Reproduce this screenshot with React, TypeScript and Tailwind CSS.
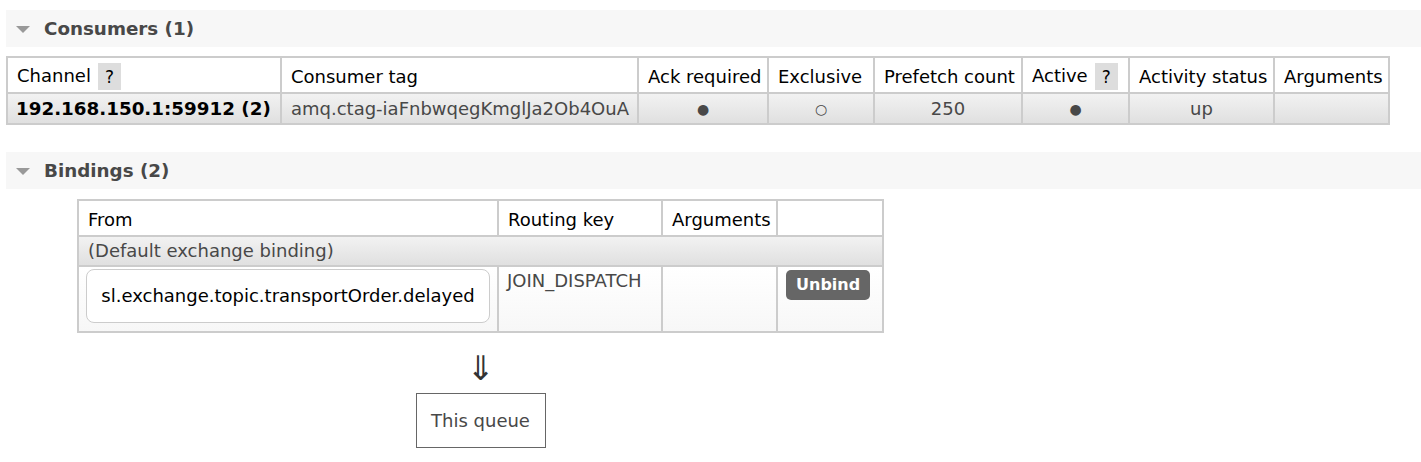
import React from "react";

function SectionHeader({ title }: { title: string }) {
  return (
    <div className="flex items-center h-[37px] bg-[#f7f7f7] w-full">
      <svg width="14" height="8" viewBox="0 0 14 8" className="ml-[10px] mr-[14px] mt-[2px]">
        <polygon points="0,0 14,0 7,7" fill="#999" />
      </svg>
      <span className="font-bold text-[18.3px] text-[#484848] leading-none pt-[2px]">{title}</span>
    </div>
  );
}

function Help() {
  return (
    <span className="inline-flex items-center justify-center w-[23px] h-[27px] bg-[#ddd] ml-[7px] align-middle text-[17px]">?</span>
  );
}

const th = "border border-[#ccc] text-left font-normal px-[9px] pt-[3px] h-[36px] text-black whitespace-nowrap";
const td = "border border-[#ccc] px-[9px] h-[31px] text-[#484848] text-center whitespace-nowrap bg-gradient-to-b from-[#f2f2f2] to-[#e0e0e0]";

export default function App() {
  return (
    <div className="bg-white min-h-[462px] pt-[10px] pl-[6px] font-['DejaVu_Sans',sans-serif] text-[18px] leading-[22px]">
      <SectionHeader title="Consumers (1)" />
      <table className="mt-[9px] border-separate border-spacing-0 border border-[#ccc] table-fixed w-[1384px]">
        <thead>
          <tr>
            <th className={`${th} w-[274px]`}>Channel<Help /></th>
            <th className={`${th} w-[357px]`}>Consumer tag</th>
            <th className={`${th} w-[130px]`}>Ack required</th>
            <th className={`${th} w-[106px]`}>Exclusive</th>
            <th className={`${th} w-[148px]`}>Prefetch count</th>
            <th className={`${th} w-[107px]`}>Active<Help /></th>
            <th className={`${th} w-[145px]`}>Activity status</th>
            <th className={`${th} w-[115px]`}>Arguments</th>
          </tr>
        </thead>
        <tbody>
          <tr>
            <td className={`${td} !text-left font-bold !text-black !px-[8px] text-[18.3px]`}>192.168.150.1:59912 (2)</td>
            <td className={`${td} !text-left`}>amq.ctag-iaFnbwqegKmglJa2Ob4OuA</td>
            <td className={td}><span className="text-[14px]">●</span></td>
            <td className={td}><span className="text-[14px]">○</span></td>
            <td className={td}>250</td>
            <td className={td}><span className="text-[14px]">●</span></td>
            <td className={td}>up</td>
            <td className={td}></td>
          </tr>
        </tbody>
      </table>

      <div className="mt-[27px]">
        <SectionHeader title="Bindings (2)" />
      </div>

      <div className="ml-[71px] mt-[10px] w-[807px] flex flex-col items-center">
        <table className="border-separate border-spacing-0 border border-[#ccc] table-fixed w-[807px]">
          <thead>
            <tr>
              <th className={`${th} w-[420px]`}>From</th>
              <th className={`${th} w-[164px]`}>Routing key</th>
              <th className={`${th} w-[115px]`}>Arguments</th>
              <th className={`${th} w-[106px]`}></th>
            </tr>
          </thead>
          <tbody>
            <tr>
              <td colSpan={4} className="border border-[#ccc] px-[9px] h-[30px] text-[#484848] text-left bg-gradient-to-b from-[#f2f2f2] to-[#e0e0e0]">
                (Default exchange binding)
              </td>
            </tr>
            <tr className="align-top">
              <td className="border border-[#ccc] pl-[7px] pr-[6px] pt-[2px] pb-[7px] h-[66px] bg-gradient-to-b from-white to-[#f7f7f7]">
                <div className="w-[404px] h-[54px] rounded-[8px] border border-[#ccc] bg-white flex items-center justify-center text-black">
                  sl.exchange.topic.transportOrder.delayed
                </div>
              </td>
              <td className="border border-[#ccc] px-[8px] pt-[3px] text-[#484848] bg-gradient-to-b from-white to-[#f7f7f7]">
                JOIN_DISPATCH
              </td>
              <td className="border border-[#ccc] bg-gradient-to-b from-white to-[#f7f7f7]"></td>
              <td className="border border-[#ccc] pl-[8px] pt-[3px] bg-gradient-to-b from-white to-[#f7f7f7]">
                <span className="inline-flex items-center justify-center h-[30px] px-[10px] rounded-[5px] bg-[#666] text-white font-bold text-[16px]">
                  Unbind
                </span>
              </td>
            </tr>
          </tbody>
        </table>
        <div className="mt-[16px] text-[34px] leading-[38px] text-[#333]">⇓</div>
        <div className="mt-[6px] w-[130px] h-[55px] border border-[#666] flex items-center justify-center text-[#484848]">
          This queue
        </div>
      </div>
    </div>
  );
}
